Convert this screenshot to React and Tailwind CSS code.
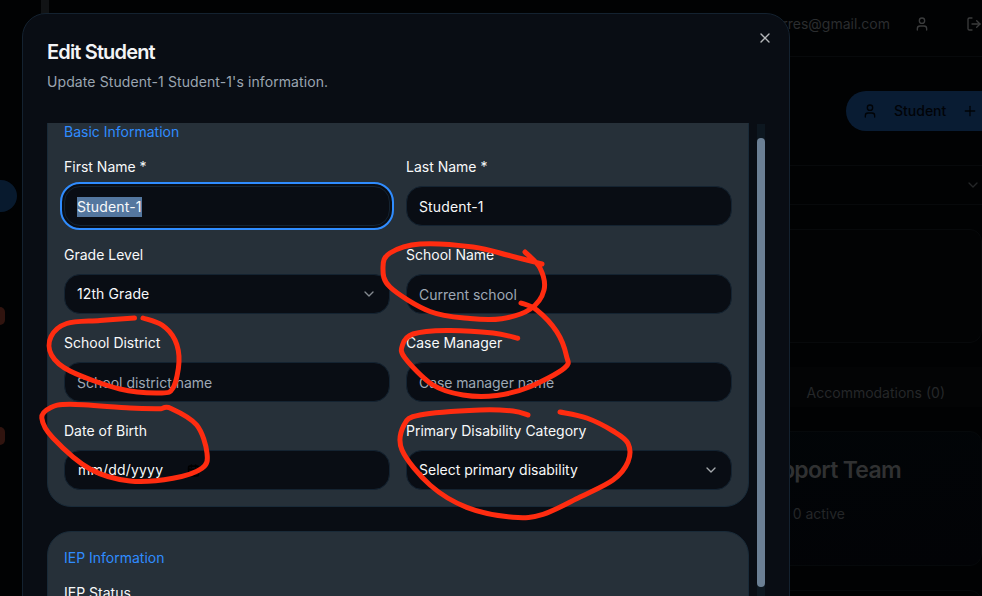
import React from "react";
import { User, LogOut, Plus, ChevronDown, X, Calendar } from "lucide-react";

// Smooth open curve through a list of points (Catmull-Rom to cubic Bezier).
function smooth(points) {
  let d = `M${points[0][0]} ${points[0][1]}`;
  for (let i = 0; i < points.length - 1; i++) {
    const p0 = points[i - 1] || points[i];
    const p1 = points[i];
    const p2 = points[i + 1];
    const p3 = points[i + 2] || p2;
    d += `C${p1[0] + (p2[0] - p0[0]) / 6} ${p1[1] + (p2[1] - p0[1]) / 6} ${p2[0] - (p3[0] - p1[0]) / 6} ${p2[1] - (p3[1] - p1[1]) / 6} ${p2[0]} ${p2[1]}`;
  }
  return d;
}

const strokes = [
  [[542, 264], [510, 255.7], [473, 247], [420, 244], [390, 253], [383, 267], [390, 287], [430, 311.5], [470, 318.5], [501.7, 318.7], [530, 309.3], [544, 290], [540, 268], [525, 252]],
  [[517.7, 338.3], [493, 333], [446.7, 330.5], [413, 334], [402.5, 345], [405, 358], [433, 385], [463, 395], [496.7, 395.5], [530, 386.7], [564.5, 368], [566.5, 356], [556.7, 331.7], [536.7, 310], [521, 303]],
  [[134.5, 318], [100, 320.5], [66.7, 323.5], [51, 336.7], [51.5, 355], [70, 371], [120, 389], [160, 393], [173, 388], [179, 361.7], [175, 340], [162, 325], [143, 318]],
  [[161, 408.7], [130, 408], [70, 404.3], [50, 408], [41.8, 418], [53, 438], [90, 469], [130, 481], [173, 478.3], [202, 468.3], [207, 453], [196.7, 425], [171, 408.4], [161, 408.7]],
  [[528, 415], [513, 411], [480, 410], [420, 415], [404, 425], [402, 450], [430, 485], [466.7, 507.3], [513, 517.3], [543, 514.3], [580, 497], [613, 480], [628, 461.7], [628, 443.3], [613, 431], [586.7, 418], [560, 412]],
];

function Field({ label, children, className = "" }) {
  return (
    <div className="flex flex-col gap-[10px]">
      <div className="h-[18px] text-sm leading-[18px] text-[#f8f9fa]">{label}</div>
      <div className={`flex h-10 items-center rounded-2xl border border-[#142331] bg-[#090d14] px-3 text-sm ${className}`}>
        {children}
      </div>
    </div>
  );
}

function Backdrop() {
  return (
    <div className="flex h-full w-full bg-[#010203]">
      <aside className="flex w-[41px] shrink-0 flex-col items-start">
        <div className="mt-[180px] h-8 w-[17px] rounded-r-full bg-[#081a2e]" />
        <div className="mt-[95px] h-[18px] w-[5px] rounded-r-full bg-[#30140f]" />
        <div className="mt-[102px] h-[18px] w-[5px] rounded-r-full bg-[#30140f]" />
      </aside>
      <div className="w-2 shrink-0 bg-[#111315]" />
      <main className="flex min-w-0 flex-1 flex-col overflow-hidden">
        <header className="flex h-[57px] shrink-0 items-center justify-end border-b border-[#07090b] pb-2 text-[#2b2d2f]">
          <span className="text-sm">cristina.torres@gmail.com</span>
          <User size={16} className="ml-6 text-[#3b3c3d]" />
          <LogOut size={16} className="ml-9 shrink-0 text-[#3b3c3d]" />
        </header>
        <div className="flex h-[109px] shrink-0 items-start justify-end overflow-hidden border-b border-[#07090b] pt-[34px]">
          <div className="flex h-10 w-[136px] shrink-0 items-center rounded-l-full bg-[#091c33] pl-4 text-[#010307]">
            <User size={16} className="shrink-0" />
            <span className="ml-4 text-sm font-medium">Student</span>
            <Plus size={16} className="ml-4 shrink-0" />
          </div>
        </div>
        <div className="flex h-[39px] shrink-0 items-center justify-end border-b border-[#07090b] pr-[1px] text-[#242628]">
          <ChevronDown size={16} />
        </div>
        <div className="mt-6 h-[114px] shrink-0 rounded-r-xl border border-[#07090b] bg-[#020304]" />
        <div className="mt-6 flex h-[40px] shrink-0 items-center justify-end bg-[#030405] pr-[37px] pt-3 text-sm text-[#252729]">
          Accommodations (0)
        </div>
        <section className="mt-6 h-[135px] shrink-0 rounded-r-xl border border-[#06090b] bg-gradient-to-br from-[#010608] to-[#020306] pt-6">
          <div className="pr-[80px] text-right text-[23px] font-semibold leading-7 tracking-[-0.7px] text-[#303132]">Support Team</div>
          <div className="mt-5 pr-[136px] text-right text-sm text-[#242628]">0 active</div>
        </section>
        <div className="mt-6 h-10 shrink-0 rounded-tr-xl border border-[#06090b]" />
      </main>
    </div>
  );
}

export default function App() {
  return (
    <div className="relative h-[596px] w-[982px] overflow-hidden font-['Inter',sans-serif]">
      <Backdrop />

      <div
        role="dialog"
        className="absolute left-[22px] top-[13px] flex h-[640px] w-[768px] flex-col rounded-3xl border border-[#142230] bg-[#090d14] px-6 pt-6"
      >
        <div className="flex items-start justify-between">
          <h2 className="h-[28px] text-xl font-semibold leading-7 tracking-[-0.84px] text-[#f3f4f6]">Edit Student</h2>
          <X size={16} className="-mr-2 -mt-[8px] text-[#b5b7ba]" />
        </div>
        <p className="mt-[6px] text-sm leading-5 tracking-[0.1px] text-[#9ba5b1]">Update Student-1 Student-1's information.</p>

        <div className="mt-[31px] flex min-h-0 flex-1 gap-2">
          <div className="w-[702px] shrink-0 overflow-hidden">
            <section className="-mt-[18px] rounded-b-3xl border border-[#192a38] bg-[#263039] p-4">
              <h3 className="text-sm leading-5 text-[#2f8cff]">Basic Information</h3>
              <div className="mt-4 grid grid-cols-2 gap-x-4 gap-y-5 text-[#f8f9fa]">
                <Field label="First Name *" className="pt-[2px] outline-2 outline-offset-[2px] outline-[#2f8cff] ring-2 ring-[#090d14]">
                  <span className="bg-[#54779f] tracking-[0.14px]">Student-1</span>
                </Field>
                <Field label="Last Name *" className="pt-[2px] tracking-[0.14px]">Student-1</Field>
                <Field label="Grade Level" className="justify-between">
                  <span className="tracking-[0.1px]">12th Grade</span>
                  <ChevronDown size={16} className="text-[#858a90]" />
                </Field>
                <Field label="School Name" className="pt-[2px]">
                  <span className="text-[#9ea8b5]">Current school</span>
                </Field>
                <Field label="School District" className="pt-[2px]">
                  <span className="text-[#9ea8b5]">School district name</span>
                </Field>
                <Field label="Case Manager" className="pt-[2px]">
                  <span className="tracking-[-0.08px] text-[#9ea8b5]">Case manager name</span>
                </Field>
                <Field label="Date of Birth">
                  <span className="ml-px tracking-[0.2px]">mm/dd/yyyy</span>
                  <Calendar size={13} strokeWidth={3} className="ml-6 text-[#000000]" />
                </Field>
                <Field label="Primary Disability Category" className="justify-between">
                  Select primary disability
                  <ChevronDown size={16} className="text-[#a5a9ad]" />
                </Field>
              </div>
            </section>
            <section className="mt-6 h-[200px] rounded-3xl border border-[#192a38] bg-[#263039] p-4">
              <h3 className="text-sm leading-5 text-[#2f8cff]">IEP Information</h3>
              <div className="mt-4 text-sm leading-[18px] text-[#f8f9fa]">IEP Status</div>
            </section>
          </div>
          <div className="mt-px w-2 shrink-0 bg-[#0d1720] pt-[14px]">
            <div className="h-[449px] rounded-full bg-[#6b7f94]" />
          </div>
        </div>
      </div>

      <svg className="pointer-events-none absolute inset-0" width="982" height="596" viewBox="0 0 982 596" fill="none">
        {strokes.map((points, i) => (
          <path key={i} d={smooth(points)} stroke="#ff2c10" strokeWidth="5" strokeLinecap="round" strokeLinejoin="round" />
        ))}
      </svg>
    </div>
  );
}
